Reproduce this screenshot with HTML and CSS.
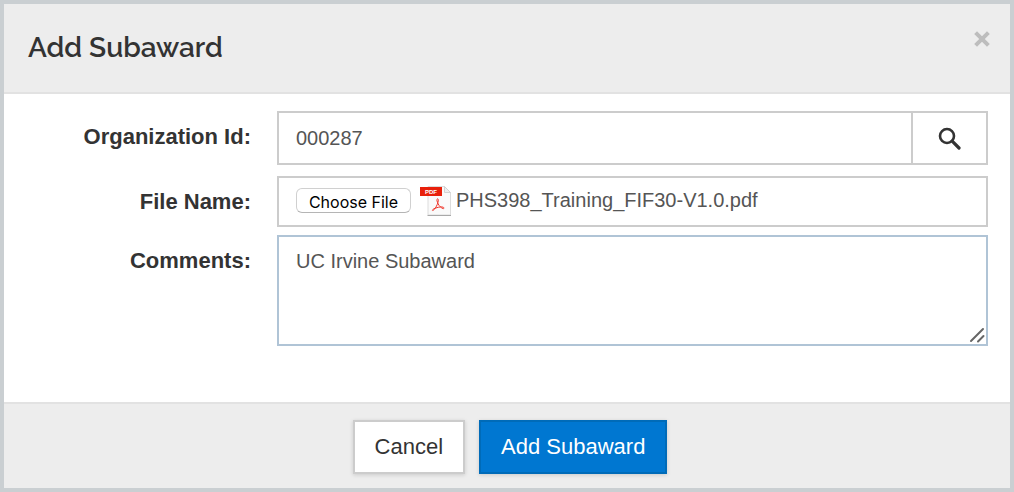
FILE: index.html
```html
<!DOCTYPE html>
<html lang="en">

<head>
    <meta charset="UTF-8">
    <meta name="viewport" content="width=device-width, initial-scale=1.0">
    <title>Add Subaward</title>
    <link rel="stylesheet" href="styles.css">
</head>

<body>
    <form class="modal" role="dialog" aria-labelledby="modal-title">
        <header class="modal-header">
            <h1 class="modal-title" id="modal-title">Add Subaward</h1>
            <button class="close" type="button" aria-label="Close">
                <svg width="16" height="16" viewBox="0 0 16 16">
                    <path d="M1.6 1.6 L14.4 14.4 M14.4 1.6 L1.6 14.4" stroke="#bdbdbd" stroke-width="4" fill="none" />
                </svg>
            </button>
        </header>

        <div class="modal-body">
            <label class="field-label" for="org">Organization Id:</label>
            <div class="input-group">
                <input class="control" id="org" type="text" value="000287">
                <button class="search" type="button" aria-label="Search">
                    <svg width="24" height="24" viewBox="0 0 24 24" fill="none" stroke="#333">
                        <circle cx="9" cy="10" r="7" stroke-width="2.6" />
                        <path d="M14.2 15.2 L21 22" stroke-width="3.2" stroke-linecap="round" />
                    </svg>
                </button>
            </div>

            <label class="field-label" for="file">File Name:</label>
            <div class="file-box">
                <input class="file-input" id="file" type="file">
                <svg class="pdf-icon" width="32" height="32" viewBox="0 0 32 32">
                    <path d="M8 1.5 H24.5 L30.5 7.5 V30 H8 Z" fill="#fafafa" stroke="#dcdcdc" />
                    <path d="M24.5 1.5 V7.5 H30.5 Z" fill="#eee" stroke="#d2d2d2" />
                    <path d="M7.5 30.5 H31" stroke="#a9a9a9" />
                    <rect y="2" width="22" height="9" fill="#e8200b" />
                    <text class="pdf-tag" x="5" y="9">PDF</text>
                    <path d="M17.5 13.8 C16.3 14 17 16.7 18.2 19 C19.2 21 21.2 22.9 23 23.6 C24 24 24.5 22.6 23 22.1 C20.5 21.4 16 22.7 13.7 23.9 C12 24.9 12.1 26 13.4 25.2 C15.2 24 17.2 20.3 18 17.2 C18.5 15.3 18.5 13.8 17.5 13.8 Z" fill="none" stroke="#f0372c" stroke-width="1" />
                </svg>
                <span class="file-name">PHS398_Training_FIF30-V1.0.pdf</span>
            </div>

            <label class="field-label" for="comments">Comments:</label>
            <div class="comments-box">
                <textarea class="control comments" id="comments">UC Irvine Subaward</textarea>
                <svg class="grip" width="16" height="16" viewBox="0 0 16 16">
                    <path d="M2 14 L14 2 M9 14.5 L14.5 9" stroke="#666" stroke-width="2" stroke-linecap="round" />
                </svg>
            </div>
        </div>

        <footer class="modal-footer">
            <button class="btn" type="button">Cancel</button>
            <button class="btn btn-primary" type="submit">Add Subaward</button>
        </footer>
    </form>
</body>

</html>
```

FILE: styles.css
```css
* {
    box-sizing: border-box;
}

body {
    margin: 0;
    color: #333;
    font-family: "Liberation Sans", Arial, sans-serif;
}

.modal {
    border: 4px solid #cacfd2;
    background: #fff;
}

.modal-header {
    display: flex;
    justify-content: space-between;
    align-items: flex-start;
    padding: 27px 20px 27px 24px;
    border-bottom: 2px solid #e2e2e2;
    background: #ededed;
}

.modal-title {
    margin: 0;
    font-family: Raleway, Lato, sans-serif;
    font-size: 28px;
    line-height: 34px;
    font-weight: 600;
}

.close {
    display: flex;
    padding: 0;
    border: 0;
    background: none;
}

.modal-body {
    display: grid;
    grid-template-columns: 225px 1fr;
    column-gap: 26px;
    padding: 17px 22px 56px;
}

.field-label {
    padding-top: 13px;
    font-size: 22px;
    line-height: 26px;
    font-weight: bold;
    text-align: right;
}

.input-group {
    display: flex;
    height: 54px;
    margin-bottom: 11px;
}

.control {
    flex: 1;
    min-width: 0;
    padding: 0 17px;
    border: 2px solid #ccc;
    border-radius: 0;
    background: #fff;
    color: #555;
    font-family: inherit;
    font-size: 20px;
    outline: 0;
}

.search {
    display: flex;
    align-items: center;
    justify-content: center;
    width: 75px;
    padding: 0;
    border: 2px solid #ccc;
    border-left: 0;
    background: #fff;
}

.file-box {
    display: flex;
    align-items: center;
    height: 51px;
    margin-bottom: 8px;
    padding: 0 17px 2px;
    border: 2px solid #ccc;
    color: #555;
    font-size: 20px;
}

.file-input {
    width: 115px;
    height: 26px;
    overflow: hidden;
    color: transparent;
    font-family: Inter, sans-serif;
    font-size: 16px;
}

.file-input::file-selector-button {
    width: 115px;
    height: 25px;
    margin: 0;
    padding: 3px 0 0;
    border: 1px solid #d0d0d0;
    border-bottom-color: #b5b5b5;
    border-radius: 6px;
    background: #fff;
    color: #000;
    font: inherit;
}

.pdf-icon {
    margin: 0 4px 0 9px;
}

.pdf-tag {
    fill: #fff;
    font-family: "Liberation Sans", sans-serif;
    font-size: 6px;
    font-weight: bold;
}

.comments-box {
    position: relative;
    display: flex;
    height: 111px;
}

.comments {
    padding-top: 12px;
    border-color: #b0c4d6;
    line-height: 24px;
    resize: none;
}

.grip {
    position: absolute;
    right: 3px;
    bottom: 3px;
    pointer-events: none;
}

.modal-footer {
    display: flex;
    justify-content: center;
    gap: 14px;
    padding: 16px 0 14px 6px;
    border-top: 2px solid #e2e2e2;
    background: #ededed;
}

.btn {
    height: 54px;
    padding: 0 20px;
    border: 2px solid #ccc;
    background: #fff;
    box-shadow: 0 1px 4px rgba(0, 0, 0, .15);
    color: #333;
    font-family: inherit;
    font-size: 22px;
}

.btn-primary {
    border-color: #006bb8;
    background: #0077d1;
    color: #fff;
}
```
